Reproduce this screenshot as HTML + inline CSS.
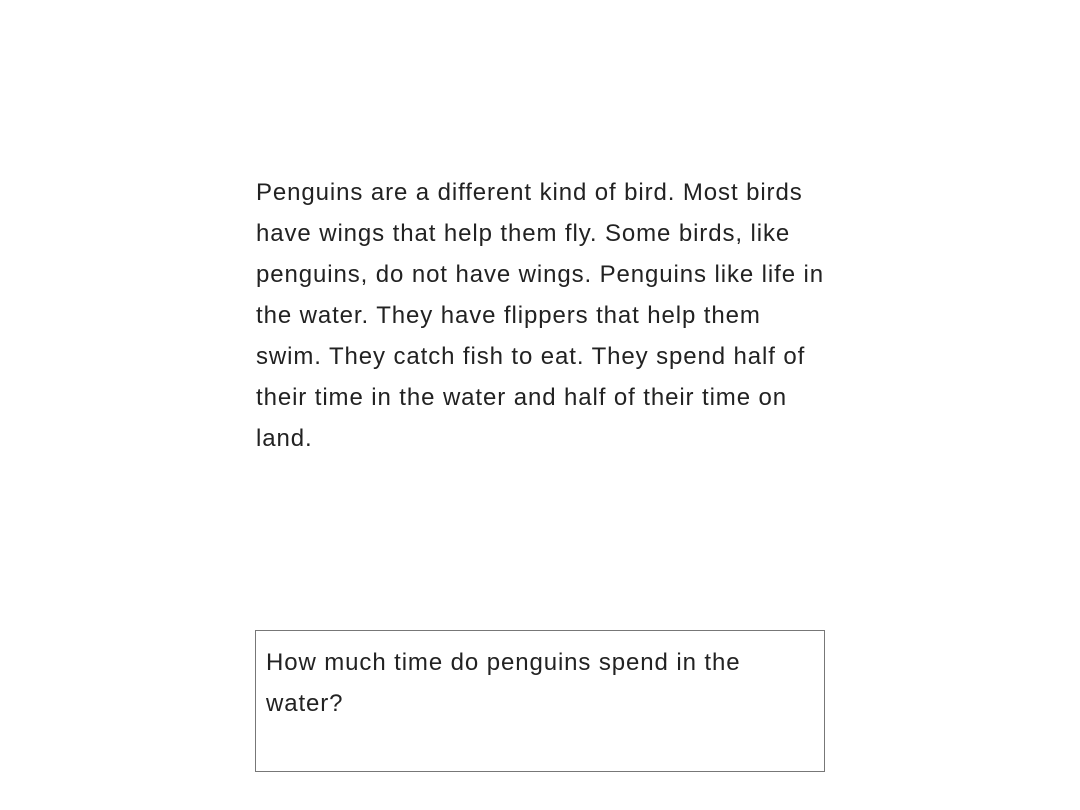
<!DOCTYPE html>
<html><head><meta charset="utf-8"><style>
html,body{margin:0;padding:0;background:#fff;width:1080px;height:810px;overflow:hidden}
body{font-family:"Liberation Sans",sans-serif;color:#222;font-size:24px;letter-spacing:0.9px}
.p{position:absolute;left:256px;top:172px;width:600px;line-height:41px;white-space:nowrap}
.box{position:absolute;left:255px;top:630px;width:568px;height:140px;border:1px solid #777;}
.q{position:absolute;left:10px;top:11px;line-height:41px;white-space:nowrap}
</style></head><body>
<div class="p">Penguins are a different kind of bird. Most birds<br>have wings that help them fly. Some birds, like<br>penguins, do not have wings. Penguins like life in<br>the water. They have flippers that help them<br>swim. They catch fish to eat. They spend half of<br>their time in the water and half of their time on<br>land.</div>
<div class="box"><div class="q">How much time do penguins spend in the<br>water?</div></div>
</body></html>
